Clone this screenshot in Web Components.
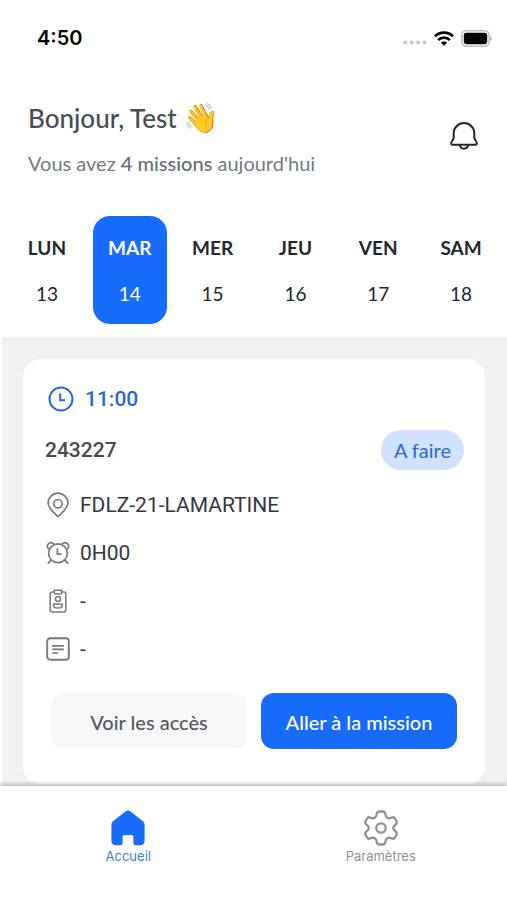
<!DOCTYPE html>
<html lang="fr">
<head>
<meta charset="utf-8">
<meta name="viewport" content="width=device-width, initial-scale=1">
<title>Missions du jour</title>
<style>
  html, body { margin: 0; background: #fff; }
  body { font-family: Lato, "Liberation Sans", sans-serif; color: #23282d; }
</style>
</head>
<body>
<mission-app></mission-app>

<script>
const define = (name, html, setup) => {
  const template = document.createElement('template');
  template.innerHTML = html;
  customElements.define(name, class extends HTMLElement {
    constructor() {
      super();
      this.attachShadow({ mode: 'open' }).append(template.content.cloneNode(true));
    }
    connectedCallback() { if (setup) setup(this, this.shadowRoot); }
  });
};

const icons = {
  wifi: '<svg width="20" height="15" viewBox="0 0 20 15"><g fill="none" stroke="#000" stroke-width="2.7"><path d="M.9 5.4a13 13 0 0 1 18.2 0"/><path d="M4.2 9a8.3 8.3 0 0 1 11.6 0"/></g><path d="M10 14.8 6.9 11.7a4.4 4.4 0 0 1 6.2 0z"/></svg>',
  battery: '<svg width="31" height="17" viewBox="0 0 31 17"><rect x=".8" y=".8" width="27.4" height="15.4" rx="4.6" fill="#fff" stroke="#bdbdbd" stroke-width="1.6"/><rect x="2.8" y="2.8" width="23.4" height="11.4" rx="2.4"/><path d="M29.3 6v5c1.900-.8 1.900-4.200 0-5z" fill="#aaa"/></svg>',
  signal: '<svg width="24" height="5" viewBox="0 0 24 5" fill="#c9c9c9"><circle cx="2.300" cy="2.500" r="2"/><circle cx="8.700" cy="2.500" r="2"/><circle cx="15.100" cy="2.500" r="2"/><circle cx="21.500" cy="2.500" r="2"/></svg>',
  bell: '<svg width="28" height="28" viewBox="0 0 28 28" fill="none" stroke="#23282e" stroke-width="2" stroke-linejoin="round"><path d="M3.700 11.300a10.300 10.300 0 0 1 20.600 0v4.100c0 2.400 2.500 3.800 2.500 6 0 1-.5 1.300-1.300 1.300h-23c-.8 0-1.300-.3-1.300-1.300 0-2.200 2.500-3.600 2.500-6z"/><path d="M10 23.200c.6 4.600 7.400 4.600 8 0"/></svg>',
  clock: '<svg width="26" height="26" viewBox="0 0 26 26" fill="none" stroke="#2868d8" stroke-width="2"><circle cx="13" cy="13" r="11.500"/><path d="M12.200 7.600v6.600h4.900"/></svg>',
  pin: '<svg width="24" height="26" viewBox="0 0 24 26" fill="none" stroke="#747a80" stroke-width="1.700" stroke-linejoin="round"><path d="M12 24.600C7.500 20.700 2.100 16.300 2.100 10.900a9.900 9.700 0 0 1 19.800 0c0 5.400-5.400 9.800-9.900 13.700z"/><circle cx="12" cy="11.700" r="4.200"/></svg>',
  alarm: '<svg width="24" height="24" viewBox="0 0 24 24" fill="none" stroke="#747a80" stroke-width="1.700" stroke-linecap="round"><circle cx="12" cy="12.300" r="9.400"/><path d="M2.200 7.500C-.3 4.200 4-.4 7.900 3M21.800 7.500C24.300 4.200 20 -.4 16.100 3M5.300 19.200l-3 3M18.700 19.200l3 3M11.400 8v5.100h3.500"/></svg>',
  badge: '<svg width="24" height="24" viewBox="0 0 24 24" fill="none" stroke="#747a80" stroke-width="1.500"><path d="M8 3.100H6.200a2 2 0 0 0-2 2v15.800a2 2 0 0 0 2 2h11.600a2 2 0 0 0 2-2V5.100a2 2 0 0 0-2-2H16"/><path d="M8.300 1.300h7.400v2.300c0 1-.5 1.400-1.500 1.400H9.800c-1 0-1.500-.4-1.500-1.400z"/><circle cx="12" cy="10" r="2.500"/><path d="M7.700 15h8.600v1.200c0 3.700-8.600 3.700-8.600 0z"/></svg>',
  note: '<svg width="24" height="24" viewBox="0 0 24 24" fill="none" stroke="#747a80" stroke-width="1.900"><rect x="1.200" y="1.200" width="21.600" height="21.600" rx="3"/><path d="M6.200 8.800h11.600M6.200 12.400h11.600M6.200 16h6" stroke-width="1.700"/></svg>',
  home: '<svg width="34" height="36" viewBox="0 0 34 36" fill="#186cfb"><path d="M14 1.700c1.900-1.600 4.100-1.600 6 0l11.600 9.200c1.400 1.100 2 2.400 2 4.300v15.900c0 2.700-1.700 4.200-4.300 4.200h-4.600c-1.500 0-2.300-.9-2.300-2.500v-5.500c0-1.600-.6-2.300-2.100-2.300h-6.600c-1.500 0-2.100.7-2.100 2.300v5.500c0 1.600-.8 2.500-2.300 2.500H4.700c-2.600 0-4.300-1.500-4.300-4.200V15.200c0-1.900.6-3.200 2-4.300z"/></svg>',
  gear: '<svg width="34" height="36" viewBox="0 0 34 36" fill="none" stroke="#8b929a" stroke-width="2.300" stroke-linejoin="round"><path d="M15.600 1.500h2.800q2.600 0 2.900 2.700c.3 3.600 2.900 5 6 3.500q2.500-1.200 3.800 1l1.200 2.200q1.300 2.300-.9 3.800c-2.900 1.900-2.900 4.700 0 6.600q2.200 1.500.9 3.800l-1.200 2.200q-1.300 2.200-3.800 1c-3.100-1.500-5.700-.1-6 3.500q-.3 2.700-2.900 2.700h-2.800q-2.600 0-2.900-2.700c-.3-3.600-2.900-5-6-3.500q-2.500 1.200-3.800-1l-1.200-2.200q-1.300-2.300.9-3.800c2.900-1.900 2.900-4.700 0-6.600q-2.200-1.500-.9-3.800l1.200-2.200q1.300-2.200 3.800-1c3.100 1.500 5.700.1 6-3.500q.3-2.700 2.900-2.700z"/><circle cx="17" cy="18" r="4.700"/></svg>'
};

define('app-icon', '<style>:host{display:block;flex:none} svg{display:block}</style><span></span>',
  (el, root) => { root.querySelector('span').innerHTML = icons[el.getAttribute('name')] || ''; });

define('status-bar', `
<style>
  :host { display: flex; align-items: center; justify-content: space-between; height: 76px; padding: 0 15px 0 37px;
    font: 600 20px/24px Inter, sans-serif; color: #000; }
  div { display: flex; align-items: center; gap: 7px; }
  .signal { padding-top: 8px; }
</style>
<time>4:50</time>
<div><app-icon class="signal" name="signal"></app-icon><app-icon name="wifi"></app-icon><app-icon name="battery"></app-icon></div>`);

define('greeting-header', `
<style>
  :host { display: flex; justify-content: space-between; padding: 20px 29px 30px 28px; }
  h1, p { margin: 0; height: 45px; line-height: 44px; }
  h1 { font-size: 26px; font-weight: 500; color: #484d54; }
  p { font-size: 20px; color: #737b83; }
  button { display: flex; align-items: center; height: 80px; padding: 0; border: 0; background: none; }
</style>
<div><h1><slot name="title"></slot></h1><p><slot></slot></p></div>
<button type="button" aria-label="Notifications"><app-icon name="bell"></app-icon></button>`);

define('week-strip', `
<style>
  :host { display: grid; grid-auto-flow: column; grid-auto-columns: 1fr; gap: 9px; padding: 0 9px 13px 10px; }
</style><slot></slot>`);

define('week-day', `
<style>
  :host { display: block; color: #23282e; }
  :host([selected]) { color: #fff; }
  button { display: flex; flex-direction: column; align-items: center; gap: 22px; width: 100%; padding: 20px 0 18px;
    border: 0; border-radius: 17px; background: none; color: inherit; font: 400 19px/24px Lato, sans-serif; }
  b { font-weight: 700; }
  :host([selected]) button { background: #186cfb; }
</style>
<button type="button"><b><slot></slot></b><slot name="date"></slot></button>`);

define('status-chip', `
<style>
  :host { display: block; padding: 8px 13px; border-radius: 20px; background: #d0e2fe; color: #2c68cf; font-size: 20px; line-height: 24px; }
</style><slot></slot>`);

define('info-row', `
<style>
  :host { display: flex; align-items: center; gap: 10px; height: 48px; padding-left: 1px; font: 400 21px/24px Roboto, sans-serif; color: #33383d; }
</style><app-icon></app-icon><span><slot></slot></span>`,
  (el, root) => {
    const icon = root.querySelector('app-icon');
    icon.setAttribute('name', el.getAttribute('icon'));
    icon.connectedCallback();
  });

define('app-button', `
<style>
  :host { display: block; flex: 1 1 0; }
  button { width: 100%; padding: 17px 0 15px; border: 0; border-radius: 13px; background: #f5f7f9; color: #55595d;
    font: 500 20px/24px Lato, sans-serif; white-space: nowrap; }
  :host([primary]) button { background: #186cfb; color: #fff; }
</style><button type="button"><slot></slot></button>`);

define('mission-card', `
<style>
  :host { display: block; padding: 16px 21px 35px 22px; border-radius: 18px; background: #fff; }
  .time { display: flex; align-items: center; gap: 11px; height: 48px; padding-left: 3px; color: #2868d8; font: 500 21px/24px Roboto, sans-serif; }
  .head { display: flex; align-items: center; justify-content: space-between; height: 54px; padding-bottom: 4px; }
  h2 { margin: 0; font: 500 21px/24px Roboto, sans-serif; color: #45494d; }
  .actions { display: flex; gap: 14px; padding: 20px 7px 0 6px; }
</style>
<div class="time"><app-icon name="clock"></app-icon><slot name="time"></slot></div>
<div class="head"><h2><slot name="number"></slot></h2><slot name="status"></slot></div>
<slot></slot>
<div class="actions"><slot name="actions"></slot></div>`);

define('tab-bar', `
<style>
  :host { display: block; background: #fff; box-shadow: 0 -1px 4px 1px rgba(0,0,0,.24); }
  nav { display: grid; grid-auto-flow: column; grid-auto-columns: 1fr; height: 114px; padding-left: 2px; }
</style><nav><slot></slot></nav>`);

define('tab-item', `
<style>
  :host { display: block; --tint: #8f9499; }
  :host([active]) { --tint: #3b82d8; }
  a { display: flex; flex-direction: column; align-items: center; gap: 2px; padding-top: 24px; color: var(--tint);
    font: 400 13px/16px Inter, sans-serif; text-decoration: none; }
</style><a href="#"><app-icon></app-icon><span><slot></slot></span></a>`,
  (el, root) => {
    const icon = root.querySelector('app-icon');
    icon.setAttribute('name', el.getAttribute('icon'));
    icon.connectedCallback();
  });

define('mission-app', `
<style>
  :host { display: flex; flex-direction: column; min-height: 100vh; }
  main { flex: 1; margin-left: 2px; padding: 22px 22px 2px 21px; background: #f1f1f1; }
  strong { font-weight: 500; color: #656d75; }
  .wave { font-size: 29px; line-height: 30px; }
</style>
<status-bar></status-bar>
<greeting-header><span slot="title">Bonjour, Test <span class="wave">👋</span></span>Vous avez <strong>4 missions</strong> aujourd'hui</greeting-header>
<week-strip>
  <week-day>LUN<span slot="date">13</span></week-day>
  <week-day selected>MAR<span slot="date">14</span></week-day>
  <week-day>MER<span slot="date">15</span></week-day>
  <week-day>JEU<span slot="date">16</span></week-day>
  <week-day>VEN<span slot="date">17</span></week-day>
  <week-day>SAM<span slot="date">18</span></week-day>
</week-strip>
<main>
  <mission-card>
    <span slot="time">11:00</span>
    <span slot="number">243227</span>
    <status-chip slot="status">A faire</status-chip>
    <info-row icon="pin">FDLZ-21-LAMARTINE</info-row>
    <info-row icon="alarm">0H00</info-row>
    <info-row icon="badge">-</info-row>
    <info-row icon="note">-</info-row>
    <app-button slot="actions">Voir les accès</app-button>
    <app-button slot="actions" primary>Aller à la mission</app-button>
  </mission-card>
</main>
<tab-bar>
  <tab-item icon="home" active>Accueil</tab-item>
  <tab-item icon="gear">Paramètres</tab-item>
</tab-bar>`);
</script>
</body>
</html>
